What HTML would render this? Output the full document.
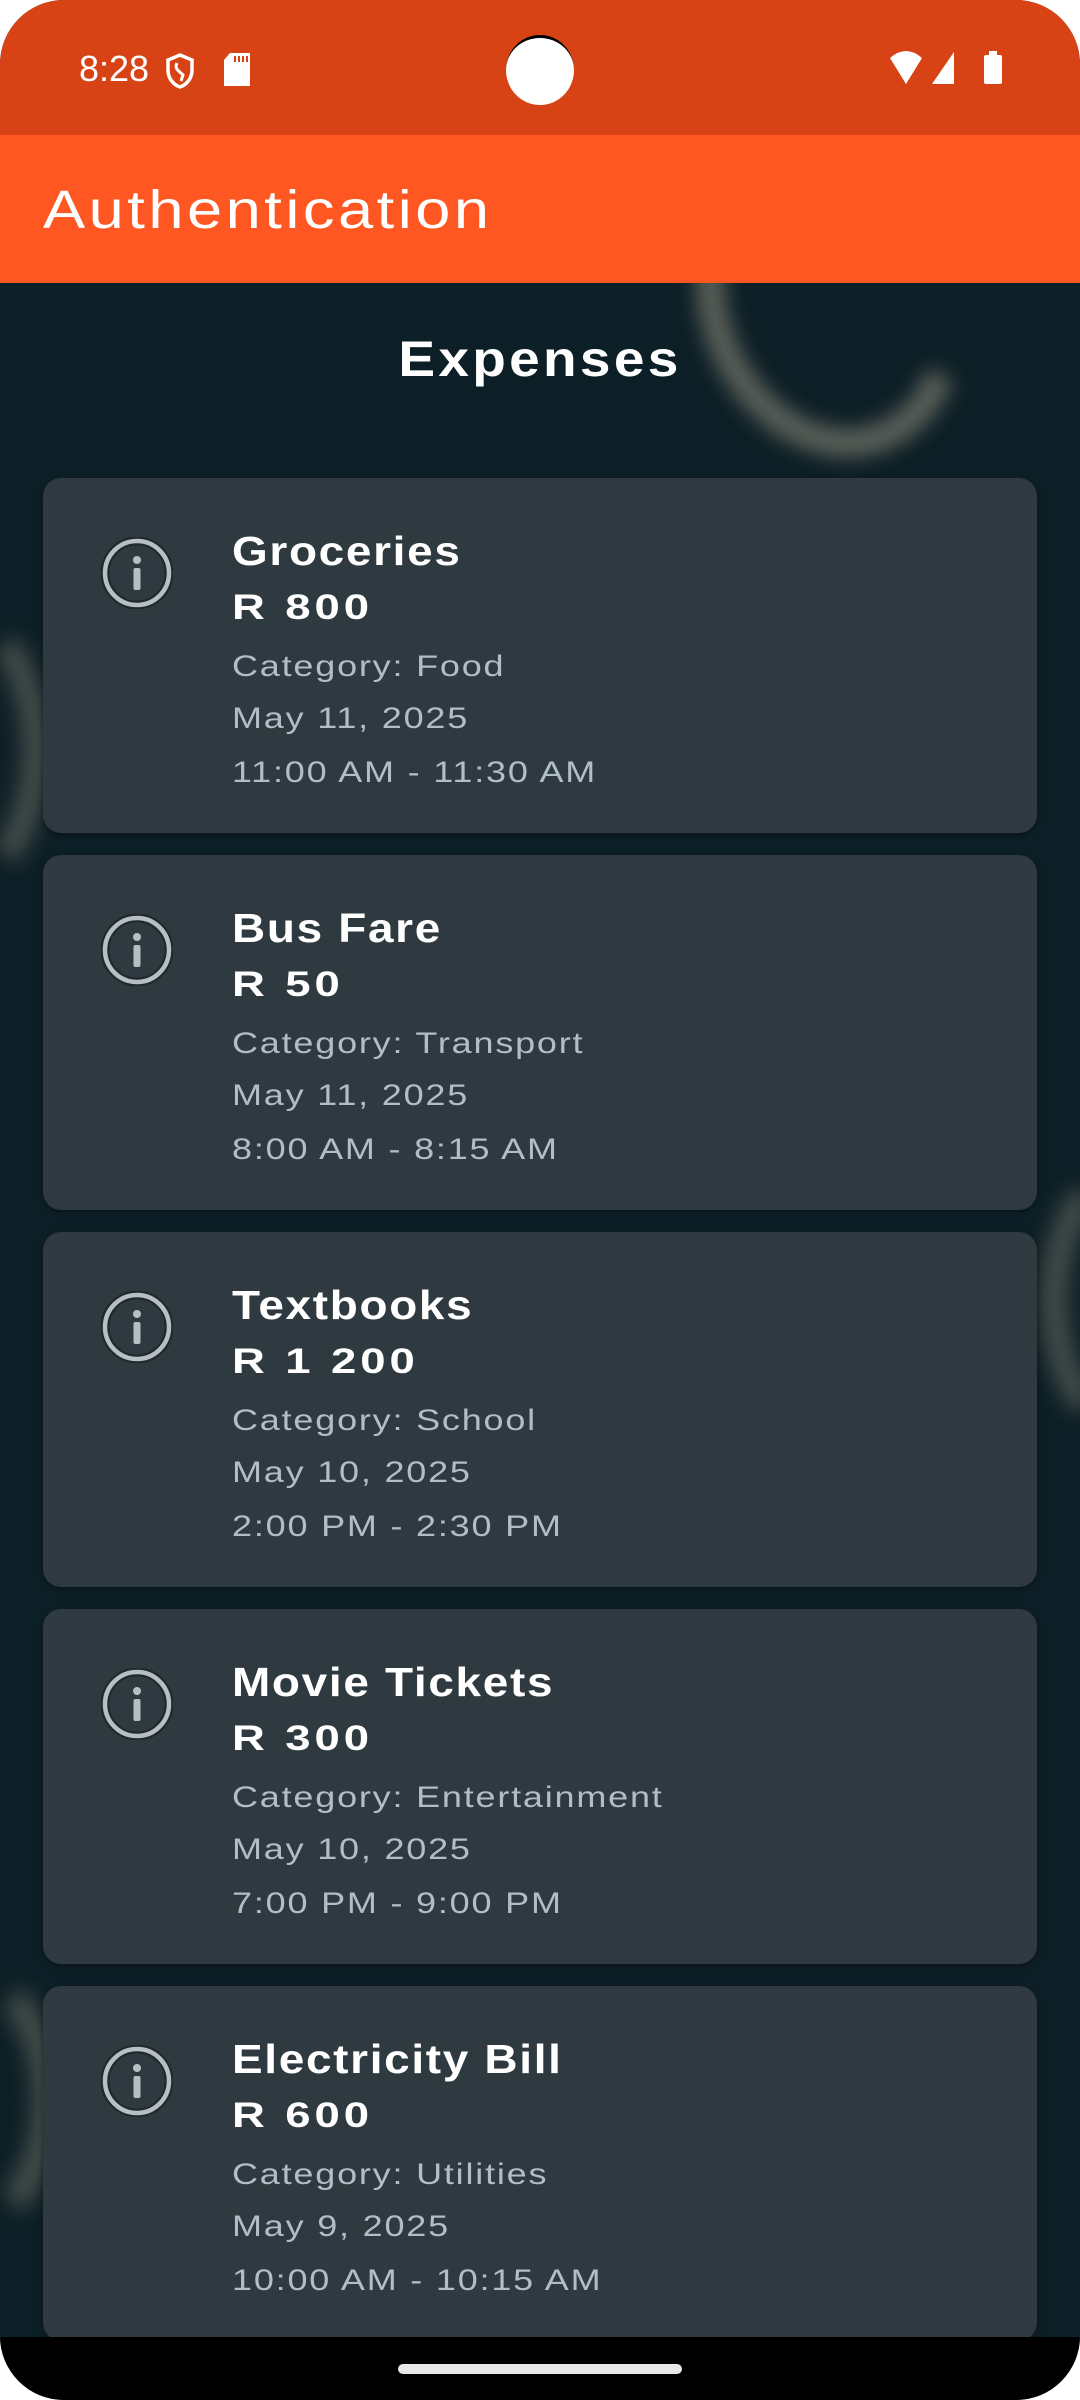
<!DOCTYPE html>
<html><head><meta charset="utf-8"><style>
*{margin:0;padding:0;box-sizing:border-box}
html,body{width:1080px;height:2400px;background:#fff;overflow:hidden}
#scr{position:absolute;left:0;top:0;width:1080px;height:2400px;border-radius:64px;overflow:hidden;background:#0d1f26;font-family:"Liberation Sans",sans-serif}
.sb{position:absolute;left:0;top:0;width:1080px;height:135px;background:#d84315}
.ab{position:absolute;left:0;top:135px;width:1080px;height:148px;background:#ff5722}
.t{position:absolute;color:#fff;white-space:nowrap}
.card{position:absolute;left:43px;width:994px;height:355px;background:#2e3a3f;border-radius:18px;box-shadow:0 2px 6px rgba(0,0,0,.4)}
.card svg{position:absolute;left:58px;top:59px}
.h,.a,.s{position:absolute;left:189px;white-space:nowrap;transform-origin:left}
.h{font-weight:bold;color:#fff;font-size:41px;letter-spacing:1.5px;top:50px;transform:scaleX(1.12)}
.a{font-weight:bold;color:#fff;font-size:35px;letter-spacing:3px;top:110px;transform:scaleX(1.3)}
.s{color:#b0bec5;font-size:30px;letter-spacing:1.5px;transform:scaleX(1.2)}
.s1{top:172px}.s2{top:224px}.s3{top:278px}
.nav{position:absolute;left:0;top:2337px;width:1080px;height:63px;background:#000}
.hd{position:absolute;left:398px;top:2364px;width:284px;height:10px;border-radius:5px;background:#e8e8e8}
.arc{position:absolute;border-radius:50%;border:28px solid #77776b;filter:blur(10px);opacity:.75}
</style></head><body><div id="scr">
<div class="arc" style="left:700px;top:140px;width:260px;height:320px;border-color:transparent transparent #77776b #77776b;transform:rotate(-20deg)"></div>
<div class="arc" style="left:-150px;top:600px;width:200px;height:300px;border-color:transparent #77776b transparent transparent;opacity:.5"></div>
<div class="arc" style="left:-160px;top:1950px;width:220px;height:300px;border-color:transparent #77776b transparent transparent;opacity:.5"></div>
<div class="arc" style="left:1040px;top:1150px;width:200px;height:300px;border-color:transparent transparent transparent #77776b;opacity:.5"></div>
<div class="sb"></div>
<div class="t" style="left:79px;top:48px;font-size:36px">8:28</div>
<svg style="position:absolute;left:165px;top:53px" width="30" height="36" viewBox="0 0 30 36"><path d="M15 2 L27 7 V17 C27 26 21 32 15 34 C9 32 3 26 3 17 V7 Z" fill="none" stroke="#fff" stroke-width="3.5"/><path d="M12 10 C9 16 14 18 18 22 L16 28" fill="none" stroke="#fff" stroke-width="3"/></svg>
<svg style="position:absolute;left:224px;top:53px" width="26" height="33"><path d="M6 0 H26 V33 H0 V7 Z" fill="#fff"/><path d="M11 3 V9 M15 3 V9 M19 3 V9 M23 3 V9" stroke="#d84315" stroke-width="2"/></svg>
<div style="position:absolute;left:506px;top:35px;width:68px;height:70px;border-radius:50%;background:#fff;border-top:3px solid #000"></div>
<svg style="position:absolute;left:888px;top:50px" width="120" height="38"><path d="M2 8 Q18 -6 34 8 L18 34 Z" fill="#fff"/><path d="M66 2 V34 H44 Z" fill="#fff"/><rect x="96" y="5" width="18" height="29" rx="2" fill="#fff"/><rect x="101" y="1" width="8" height="5" fill="#fff"/></svg>
<div class="ab"></div>
<div class="t" style="left:43px;top:179px;font-size:54px;letter-spacing:3px;transform:scaleX(1.17);transform-origin:left">Authentication</div>
<div class="t" style="left:0;width:1080px;text-align:center;top:330px;font-size:50px;font-weight:bold;letter-spacing:3px;transform:scaleX(1.1)">Expenses</div>

<div class="card" style="top:478px"><svg width="72" height="72"><circle cx="36" cy="36" r="32" fill="none" stroke="#1f2a2e" stroke-width="9"/><circle cx="36" cy="36" r="32" fill="none" stroke="#b8bfc2" stroke-width="4.5"/><circle cx="36" cy="23" r="4" fill="#b8bfc2"/><rect x="32.5" y="31" width="7" height="22" rx="2" fill="#b8bfc2"/></svg>
<div class="h">Groceries</div><div class="a">R 800</div><div class="s s1">Category: Food</div><div class="s s2">May 11, 2025</div><div class="s s3">11:00 AM - 11:30 AM</div></div>

<div class="card" style="top:855px"><svg width="72" height="72"><circle cx="36" cy="36" r="32" fill="none" stroke="#1f2a2e" stroke-width="9"/><circle cx="36" cy="36" r="32" fill="none" stroke="#b8bfc2" stroke-width="4.5"/><circle cx="36" cy="23" r="4" fill="#b8bfc2"/><rect x="32.5" y="31" width="7" height="22" rx="2" fill="#b8bfc2"/></svg>
<div class="h">Bus Fare</div><div class="a">R 50</div><div class="s s1">Category: Transport</div><div class="s s2">May 11, 2025</div><div class="s s3">8:00 AM - 8:15 AM</div></div>

<div class="card" style="top:1232px"><svg width="72" height="72"><circle cx="36" cy="36" r="32" fill="none" stroke="#1f2a2e" stroke-width="9"/><circle cx="36" cy="36" r="32" fill="none" stroke="#b8bfc2" stroke-width="4.5"/><circle cx="36" cy="23" r="4" fill="#b8bfc2"/><rect x="32.5" y="31" width="7" height="22" rx="2" fill="#b8bfc2"/></svg>
<div class="h">Textbooks</div><div class="a">R 1 200</div><div class="s s1">Category: School</div><div class="s s2">May 10, 2025</div><div class="s s3">2:00 PM - 2:30 PM</div></div>

<div class="card" style="top:1609px"><svg width="72" height="72"><circle cx="36" cy="36" r="32" fill="none" stroke="#1f2a2e" stroke-width="9"/><circle cx="36" cy="36" r="32" fill="none" stroke="#b8bfc2" stroke-width="4.5"/><circle cx="36" cy="23" r="4" fill="#b8bfc2"/><rect x="32.5" y="31" width="7" height="22" rx="2" fill="#b8bfc2"/></svg>
<div class="h">Movie Tickets</div><div class="a">R 300</div><div class="s s1">Category: Entertainment</div><div class="s s2">May 10, 2025</div><div class="s s3">7:00 PM - 9:00 PM</div></div>

<div class="card" style="top:1986px"><svg width="72" height="72"><circle cx="36" cy="36" r="32" fill="none" stroke="#1f2a2e" stroke-width="9"/><circle cx="36" cy="36" r="32" fill="none" stroke="#b8bfc2" stroke-width="4.5"/><circle cx="36" cy="23" r="4" fill="#b8bfc2"/><rect x="32.5" y="31" width="7" height="22" rx="2" fill="#b8bfc2"/></svg>
<div class="h">Electricity Bill</div><div class="a">R 600</div><div class="s s1">Category: Utilities</div><div class="s s2">May 9, 2025</div><div class="s s3">10:00 AM - 10:15 AM</div></div>

<div class="nav"></div><div class="hd"></div>
</div></body></html>
